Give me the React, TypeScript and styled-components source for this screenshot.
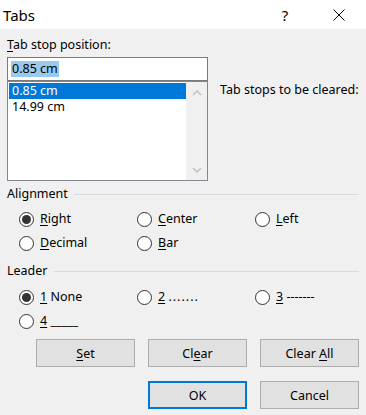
import React from "react";
import styled, { createGlobalStyle } from "styled-components";

const GlobalStyle = createGlobalStyle`
  html, body {
    margin: 0;
    padding: 0;
    background: #f0f0f0;
  }
  body {
    font-family: "Noto Sans", "Liberation Sans", sans-serif;
    font-size: 12.5px;
    color: #000;
  }
`;

const Window = styled.div`
  width: 366px;
  height: 415px;
  background: #f0f0f0;
  overflow: hidden;
`;

const TitleBar = styled.div`
  display: flex;
  align-items: center;
  height: 29px;
  background: #fff;
`;

const Title = styled.div`
  flex: 1;
  padding-left: 3px;
  font-size: 15px;
  line-height: 20px;
`;

const CaptionButton = styled.div`
  width: 54px;
  height: 29px;
  display: flex;
  align-items: center;
  justify-content: center;
  font-size: 15px;
`;

const Body = styled.div`
  padding: 8px 7px 0;
`;

const TopSection = styled.div`
  display: flex;
`;

const LeftColumn = styled.div`
  width: 201px;
  display: flex;
  flex-direction: column;
`;

const FieldLabel = styled.div`
  line-height: 16px;
  margin-bottom: 4px;
`;

const Key = styled.span`
  text-decoration: underline;
  text-underline-offset: 2px;
`;

const TextBox = styled.div`
  height: 22px;
  border: 1px solid #7a7a7a;
  background: #fff;
  display: flex;
  align-items: center;
  padding-left: 3px;
`;

const Selection = styled.span`
  background: #99c9ef;
  line-height: 16px;
  padding: 0 1px;
`;

const ListBox = styled.div`
  height: 98px;
  border: 1px solid #828790;
  background: #fff;
  display: flex;
`;

const ListItems = styled.div`
  flex: 1;
  padding: 1px 0 0 1px;
`;

const ListItem = styled.div<{ $selected?: boolean }>`
  height: 16px;
  line-height: 16px;
  padding-left: 3px;
  background: ${p => (p.$selected ? "#0078d7" : "transparent")};
  color: ${p => (p.$selected ? "#fff" : "#000")};
`;

const ScrollBar = styled.div`
  width: 21px;
  background: #f0f0f0;
  display: flex;
  flex-direction: column;
  justify-content: space-between;
  align-items: center;
  padding: 8px 0 7px;
`;

const RightColumn = styled.div`
  flex: 1;
  padding: 45px 0 0 12px;
  line-height: 16px;
  white-space: nowrap;
`;

const GroupHeader = styled.div`
  display: flex;
  align-items: center;
  gap: 6px;
  line-height: 16px;
  margin-top: 5px;
`;

const Rule = styled.div`
  flex: 1;
  height: 1px;
  background: #dadada;
  margin-top: 1px;
`;

const RadioGrid = styled.div<{ $top: number }>`
  display: grid;
  grid-template-columns: 118px 118px auto;
  grid-auto-rows: 24px;
  padding-left: 12px;
  margin-top: ${p => p.$top}px;
  margin-bottom: 8px;
`;

const RadioOption = styled.label`
  display: flex;
  align-items: center;
  gap: 6px;
  line-height: 16px;
  white-space: nowrap;
`;

const Circle = styled.span<{ $checked?: boolean }>`
  box-sizing: border-box;
  width: 15px;
  height: 15px;
  border-radius: 50%;
  border: 1px solid #333;
  background: #fff;
  display: flex;
  align-items: center;
  justify-content: center;
  &::after {
    content: "";
    width: 9px;
    height: 9px;
    border-radius: 50%;
    background: ${p => (p.$checked ? "#333" : "transparent")};
  }
`;

const Leader = styled.span`
  letter-spacing: 1px;
`;

const ButtonRow = styled.div<{ $top: number }>`
  display: flex;
  justify-content: flex-end;
  gap: 13px;
  margin-top: ${p => p.$top}px;
`;

const Button = styled.div<{ $default?: boolean }>`
  box-sizing: border-box;
  width: 99px;
  height: 28px;
  display: flex;
  align-items: center;
  justify-content: center;
  background: #e1e1e1;
  border: ${p => (p.$default ? "2px solid #0078d7" : "1px solid #adadad")};
`;

const Chevron: React.FC<{ down?: boolean }> = ({ down }) => (
  <svg width="10" height="6" viewBox="0 0 10 6">
    <polyline
      points={down ? "1,1 5,5 9,1" : "1,5 5,1 9,5"}
      fill="none"
      stroke="#c2c2c2"
      strokeWidth="1.5"
    />
  </svg>
);

interface RadioProps {
  checked?: boolean;
  children: React.ReactNode;
}

const Radio: React.FC<RadioProps> = ({ checked, children }) => (
  <RadioOption>
    <Circle $checked={checked} />
    <span>{children}</span>
  </RadioOption>
);

export default function App() {
  return (
    <Window>
      <GlobalStyle />
      <TitleBar>
        <Title>Tabs</Title>
        <CaptionButton>?</CaptionButton>
        <CaptionButton>
          <svg width="12" height="12" viewBox="0 0 12 12">
            <path d="M0.5 0.5 L11.5 11.5 M11.5 0.5 L0.5 11.5" stroke="#000" strokeWidth="1" />
          </svg>
        </CaptionButton>
      </TitleBar>
      <Body>
        <TopSection>
          <LeftColumn>
            <FieldLabel>
              <Key>T</Key>ab stop position:
            </FieldLabel>
            <TextBox>
              <Selection>0.85 cm</Selection>
            </TextBox>
            <ListBox>
              <ListItems>
                <ListItem $selected>0.85 cm</ListItem>
                <ListItem>14.99 cm</ListItem>
              </ListItems>
              <ScrollBar>
                <Chevron />
                <Chevron down />
              </ScrollBar>
            </ListBox>
          </LeftColumn>
          <RightColumn>Tab stops to be cleared:</RightColumn>
        </TopSection>

        <GroupHeader>
          Alignment
          <Rule />
        </GroupHeader>
        <RadioGrid $top={5}>
          <Radio checked>
            <Key>R</Key>ight
          </Radio>
          <Radio>
            <Key>C</Key>enter
          </Radio>
          <Radio>
            <Key>L</Key>eft
          </Radio>
          <Radio>
            <Key>D</Key>ecimal
          </Radio>
          <Radio>
            <Key>B</Key>ar
          </Radio>
        </RadioGrid>

        <GroupHeader>
          Leader
          <Rule />
        </GroupHeader>
        <RadioGrid $top={6}>
          <Radio checked>
            <Key>1</Key> None
          </Radio>
          <Radio>
            <Key>2</Key> <Leader>.......</Leader>
          </Radio>
          <Radio>
            <Key>3</Key> -------
          </Radio>
          <Radio>
            <Key>4</Key> _____
          </Radio>
        </RadioGrid>

        <ButtonRow $top={-2}>
          <Button>
            <span>
              <Key>S</Key>et
            </span>
          </Button>
          <Button>
            <span>
              Cl<Key>e</Key>ar
            </span>
          </Button>
          <Button>
            <span>
              Clear <Key>A</Key>ll
            </span>
          </Button>
        </ButtonRow>
        <ButtonRow $top={14}>
          <Button $default>OK</Button>
          <Button>Cancel</Button>
        </ButtonRow>
      </Body>
    </Window>
  );
}
